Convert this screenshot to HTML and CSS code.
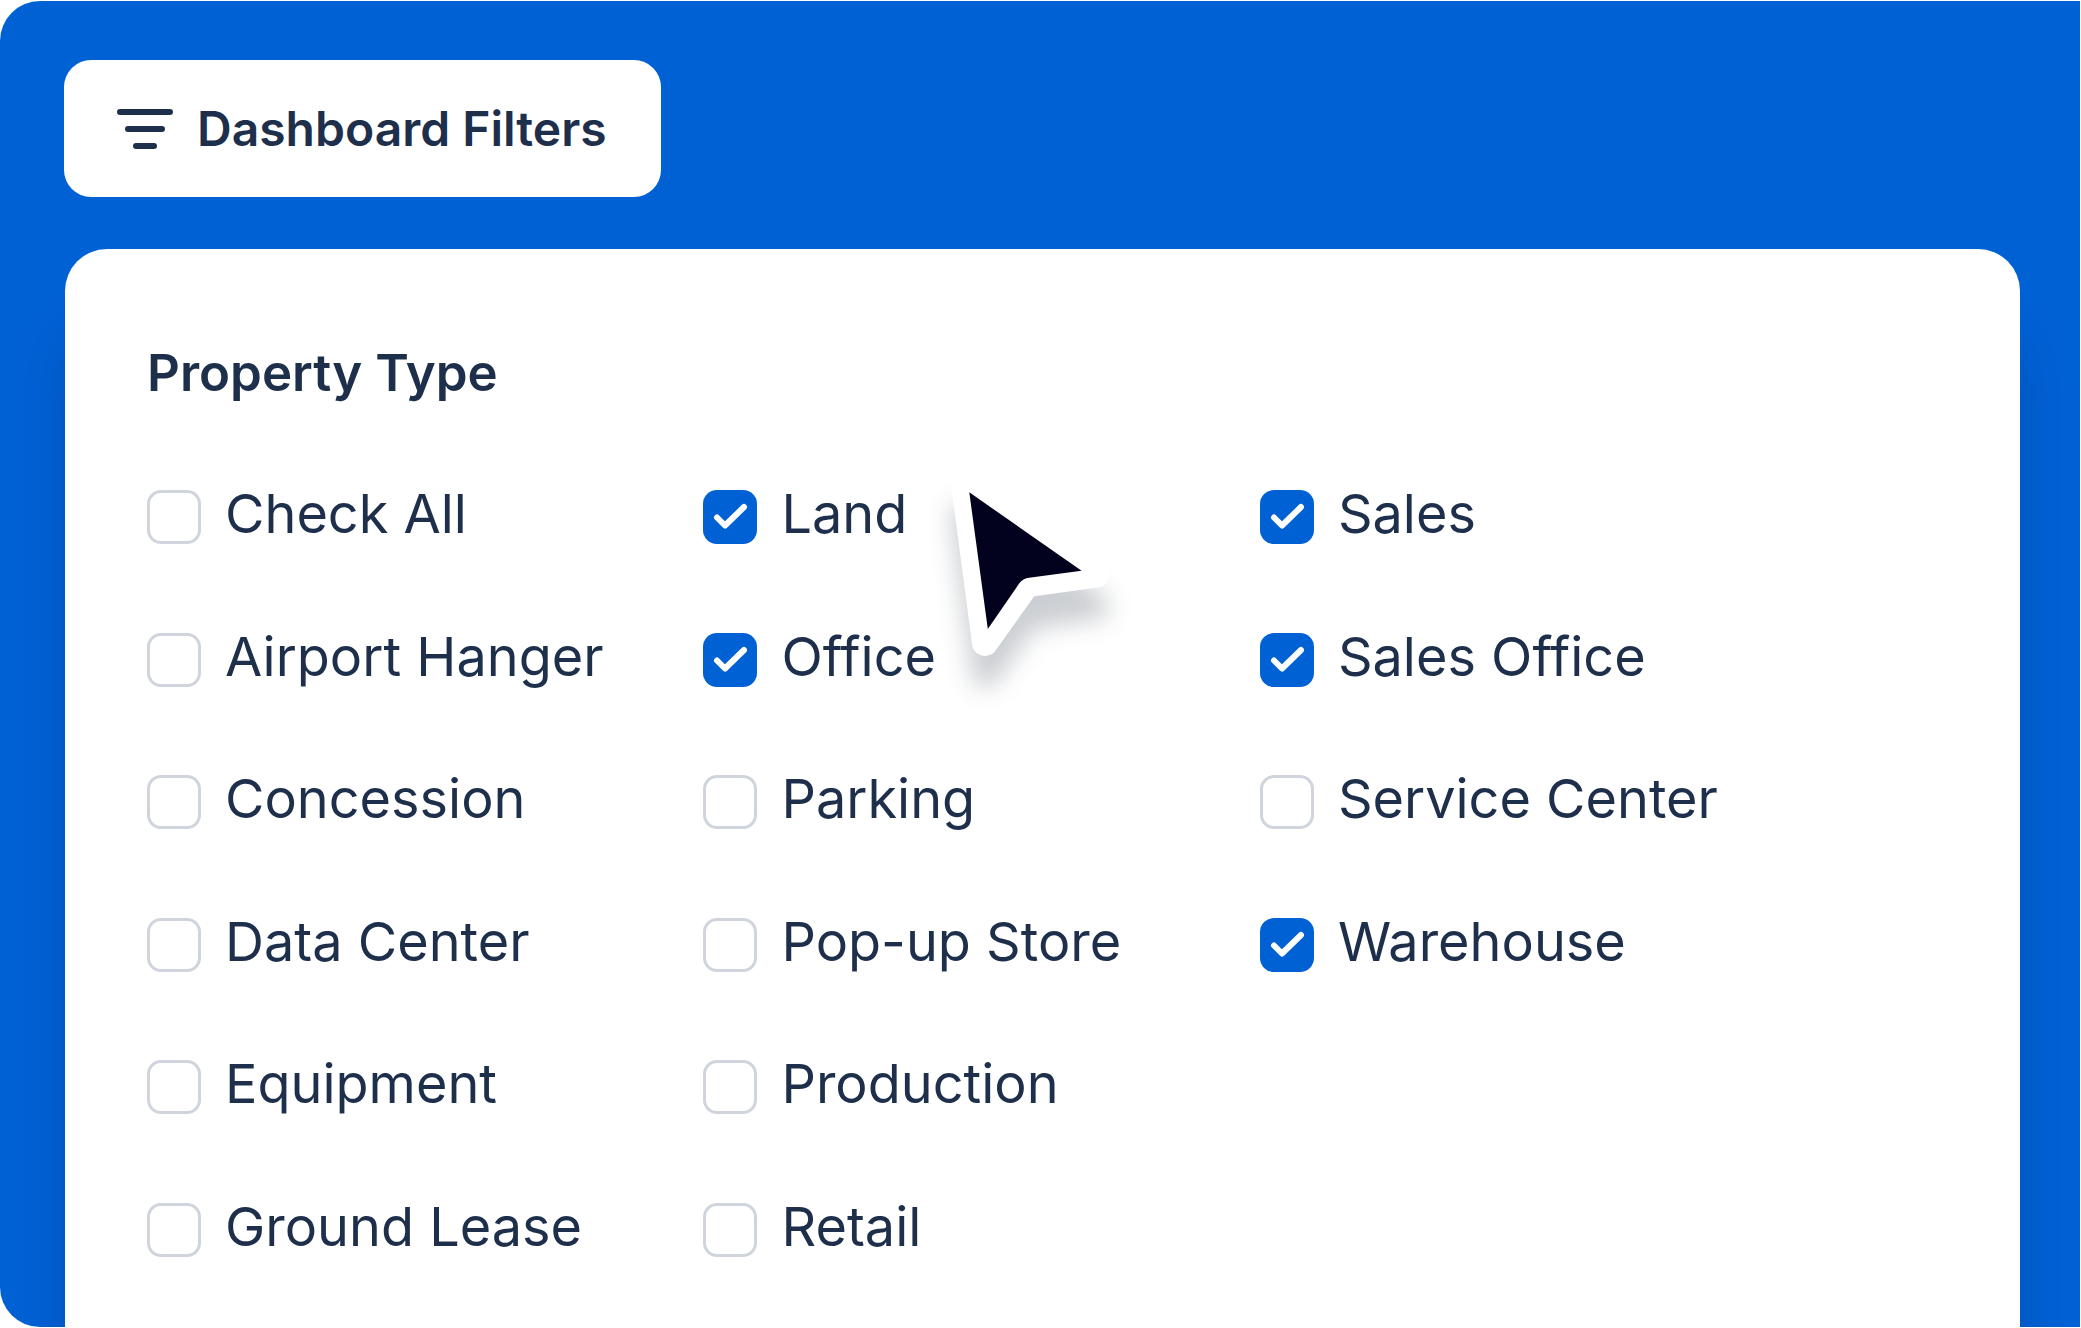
FILE: index.html
```html
<!DOCTYPE html>
<html lang="en">
<head>
  <meta charset="UTF-8">
  <meta name="viewport" content="width=device-width, initial-scale=1.0">
  <title>Dashboard Filters</title>
  <link rel="stylesheet" href="styles.css">
</head>
<body>
  <main class="stage">
    <button type="button" class="filter-button">
      <svg class="filter-icon" viewBox="0 0 56 40" aria-hidden="true">
        <path d="M3 3H53M11 20H45M19 37H37"/>
      </svg>
      Dashboard Filters
    </button>

    <form class="panel">
      <h2>Property Type</h2>
      <div class="options">
        <label class="option"><input type="checkbox">Check All</label>
        <label class="option"><input type="checkbox">Airport Hanger</label>
        <label class="option"><input type="checkbox">Concession</label>
        <label class="option"><input type="checkbox">Data Center</label>
        <label class="option"><input type="checkbox">Equipment</label>
        <label class="option"><input type="checkbox">Ground Lease</label>

        <label class="option"><input type="checkbox" checked>Land</label>
        <label class="option"><input type="checkbox" checked>Office</label>
        <label class="option"><input type="checkbox">Parking</label>
        <label class="option"><input type="checkbox">Pop-up Store</label>
        <label class="option"><input type="checkbox">Production</label>
        <label class="option"><input type="checkbox">Retail</label>

        <label class="option"><input type="checkbox" checked>Sales</label>
        <label class="option"><input type="checkbox" checked>Sales Office</label>
        <label class="option"><input type="checkbox">Service Center</label>
        <label class="option"><input type="checkbox" checked>Warehouse</label>
      </div>

      <!-- mouse pointer over the panel -->
      <svg class="pointer" viewBox="920 450 220 270" aria-hidden="true">
        <path class="pointer-outline" d="M964 484L1096 574.6L1027 584L985 643Z"/>
        <path class="pointer-arrow" d="M969.3 492.3L1081.6 570.8L1029 577.8Q1023 578.5 1019.5 583L987.8 629Z"/>
      </svg>
    </form>
  </main>
</body>
</html>
```

FILE: styles.css
```css
* {
  box-sizing: border-box;
}
body {
  margin: 0;
  padding: 1px 1px 1px 0;
  background: #fff;
  color: #1e2f4b;
  font-family: Inter, "Liberation Sans", sans-serif;
}
.stage {
  display: flex;
  flex-direction: column;
  align-items: flex-start;
  min-height: calc(100vh - 2px);
  padding: 59px 60px 0 64px;
  background: #0061d5;
  border-radius: 40px 0 0 40px;
  overflow: hidden;
}
.filter-button {
  display: flex;
  align-items: center;
  gap: 24px;
  height: 137px;
  padding: 0 54px 0 53px;
  border: none;
  border-radius: 27px;
  background: #fff;
  color: inherit;
  font: 600 48px/60px Inter, "Liberation Sans", sans-serif;
  cursor: pointer;
}
.filter-icon {
  width: 56px;
  height: 40px;
  fill: none;
  stroke: currentColor;
  stroke-width: 6;
  stroke-linecap: round;
}
.panel {
  position: relative;
  display: flex;
  flex: 1;
  flex-direction: column;
  align-self: stretch;
  margin: 52px 0 0 1px;
  padding: 93px 78px 70px 82px;
  background: #fff;
  border-radius: 42px 42px 0 0;
  box-shadow: 0 80px 56px -12px rgba(20, 30, 60, 0.3);
}
h2 {
  margin: 0;
  font-size: 51px;
  font-weight: 600;
  line-height: 62px;
}
.options {
  display: grid;
  flex: 1;
  grid-template-rows: repeat(6, auto);
  grid-template-columns: repeat(3, 31%);
  grid-auto-flow: column;
  align-content: space-between;
  row-gap: 40px;
  margin-top: 80px;
}
.option {
  display: flex;
  align-items: flex-end;
  gap: 24px;
  font-size: 54px;
  line-height: 60px;
  white-space: nowrap;
}
.option input {
  appearance: none;
  flex: none;
  width: 54px;
  height: 54px;
  margin: 0;
  border: 3px solid #d0d5dd;
  border-radius: 14px;
  background: #fff;
}
.option input:checked {
  border: none;
  background: #0061d5 url("data:image/svg+xml,%3Csvg xmlns='http://www.w3.org/2000/svg' viewBox='0 0 54 54'%3E%3Cpath d='M14 27.5L22 35.5L41 17' fill='none' stroke='%23fff' stroke-width='6' stroke-linecap='round' stroke-linejoin='round'/%3E%3C/svg%3E") center / contain no-repeat;
}
.pointer {
  position: absolute;
  top: 201px;
  left: 855px;
  width: 220px;
  height: 270px;
  overflow: visible;
  pointer-events: none;
}
.pointer-outline {
  fill: #fff;
  stroke: #fff;
  stroke-width: 26;
  stroke-linejoin: round;
  filter: drop-shadow(0 32px 12px rgba(20, 30, 50, 0.22));
}
.pointer-arrow {
  fill: #02021e;
}
```
